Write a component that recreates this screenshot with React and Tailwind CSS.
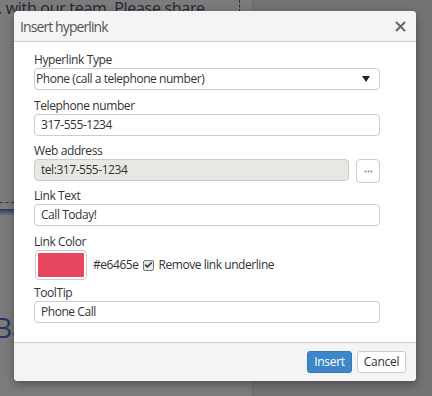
import { Check } from "lucide-react";

const Field = ({ label, children, className = "" }) => (
  <div className={className}>
    <div className="text-[12px] leading-4 tracking-[-0.4px] text-[#333]">{label}</div>
    {children}
  </div>
);

const Box = ({ children, className = "" }) => (
  <div
    className={`h-[22px] border border-[#ccc] rounded-[4px] flex items-center text-[12px] tracking-[-0.45px] text-[#333] ${className}`}
  >
    {children}
  </div>
);

const App = () => {
  return (
    <div className="relative w-[432px] h-[396px] overflow-hidden bg-[#737373] font-['Open_Sans',sans-serif]">
      {/* page behind the overlay */}
      <div className="flex h-full">
        <div className="w-[253px] h-full bg-[#7b7b7b] border-r border-[#6a6a6a] flex flex-col">
          <div className="flex items-start">
            <div className="text-[16px] leading-[16px] tracking-[-0.3px] text-[#1f2736] whitespace-nowrap -ml-[2px]">
              . with our team. Please share
            </div>
            <div className="ml-auto mr-[12px] w-0 h-[12px] border-l border-dashed border-[#333]"></div>
          </div>
          <div className="mt-[186px] w-[14px] border-t border-dashed border-[#333]"></div>
          <div className="mt-[6px] w-[14px] h-[6px] bg-gradient-to-b from-[#2a3a5c] to-[#6c7282]"></div>
          <div className="mt-[98px] -ml-[6px] text-[28px] leading-[28px] text-[#24355e]">Ba</div>
        </div>
        <div className="flex-1"></div>
      </div>

      {/* dialog */}
      <div className="absolute left-[14px] top-[11px] w-[402px] h-[370px] bg-white rounded-[4px] shadow-[0_3px_8px_rgba(0,0,0,0.35)] flex flex-col overflow-hidden">
        <div className="h-[31px] shrink-0 bg-[#f4f4f4] border-b border-[#cfcfcf] flex items-center pl-[6px] pr-[10px]">
          <span className="text-[14px] tracking-[-0.9px] text-[#555]">Insert hyperlink</span>
          <svg className="ml-auto" width="11" height="11" viewBox="0 0 11 11">
            <path d="M1 1L10 10M10 1L1 10" stroke="#666" strokeWidth="2" />
          </svg>
        </div>

        <div className="flex-1 pl-[20px] pr-[36px] pt-[10px]">
          <Field label="Hyperlink Type">
            <Box className="pl-[1px] pr-[9px]">
              <span>Phone (call a telephone number)</span>
              <svg className="ml-auto" width="8" height="6" viewBox="0 0 8 6">
                <path d="M0 0H8L4 6Z" fill="#222" />
              </svg>
            </Box>
          </Field>
          <Field label="Telephone number" className="mt-[8px]">
            <Box className="px-[6px]">317-555-1234</Box>
          </Field>
          <Field label="Web address" className="mt-[7px]">
            <div className="flex items-start gap-[7px]">
              <Box className="flex-1 px-[6px] bg-[#e8e8e2]">tel:317-555-1234</Box>
              <div className="w-[24px] h-[24px] border border-[#ccc] rounded-[4px] flex items-center justify-center">
                <svg width="9" height="3" viewBox="0 0 9 3">
                  <circle cx="1.5" cy="1.5" r="1" fill="#888" />
                  <circle cx="4.5" cy="1.5" r="1" fill="#888" />
                  <circle cx="7.5" cy="1.5" r="1" fill="#888" />
                </svg>
              </div>
            </div>
          </Field>
          <Field label="Link Text" className="mt-[5px]">
            <Box className="px-[6px]">Call Today!</Box>
          </Field>
          <Field label="Link Color" className="mt-[8px]">
            <div className="flex items-center">
              <div className="ml-[1px] w-[52px] h-[30px] border border-[#ccc] rounded-[4px] p-[2px]">
                <div className="w-full h-full bg-[#e6465e] rounded-[1px]"></div>
              </div>
              <span className="ml-[6px] text-[12px] tracking-[-0.45px] text-[#333]">#e6465e</span>
              <div className="ml-[4px] w-[11px] h-[11px] border border-[#777] rounded-[2px] bg-[#e8e8e8] flex items-center justify-center">
                <Check size={10} strokeWidth={4} color="#333" />
              </div>
              <span className="ml-[5px] text-[12px] tracking-[-0.45px] text-[#333]">Remove link underline</span>
            </div>
          </Field>
          <Field label="ToolTip" className="mt-[5px]">
            <Box className="px-[6px]">Phone Call</Box>
          </Field>
        </div>

        <div className="h-[39px] shrink-0 bg-[#f4f4f4] border-t border-[#cfcfcf] flex items-center justify-end gap-[5px] pr-[10px]">
          <button className="w-[45px] h-[22px] rounded-[3px] bg-[#3d87c9] border border-[#3579b5] text-white text-[12px] tracking-[-0.3px]">
            Insert
          </button>
          <button className="w-[49px] h-[22px] rounded-[3px] bg-white border border-[#ccc] text-[#333] text-[12px] tracking-[-0.3px]">
            Cancel
          </button>
        </div>
      </div>
    </div>
  );
};

export default App;
